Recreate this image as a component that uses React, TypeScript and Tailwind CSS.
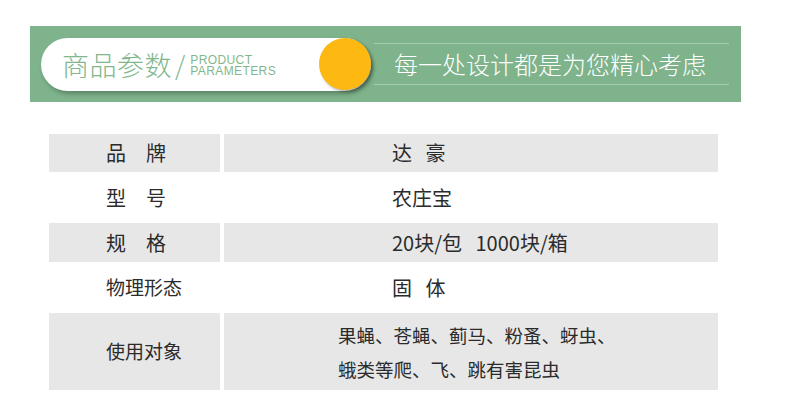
const rows = [
  { label: '品　牌', value: '达\u00a0\u00a0\u00a0豪', h: 'h-[38px]', gray: true, lsize: 'text-[20px]' },
  { label: '型　号', value: '农庄宝', h: 'h-[51px]', gray: false, lsize: 'text-[20px]' },
  { label: '规　格', value: '20块/包\u00a0\u00a0\u00a01000块/箱', h: 'h-[39px]', gray: true, lsize: 'text-[20px]' },
  { label: '物理形态', value: '固\u00a0\u00a0\u00a0体', h: 'h-[51px]', gray: false, lsize: 'text-[19px]' },
];

export default function App() {
  return (
    <main
      className="w-[785px] h-[410px] bg-white overflow-hidden text-[#2b2b2b]"
      style={{ fontFamily: '"Noto Sans CJK SC", "Noto Sans", sans-serif' }}
    >
      {/* Banner */}
      <div className="ml-[30px] mt-[26px] w-[711px] h-[76px] bg-[#7eb38b] flex items-center">
        <div className="ml-[11px] w-[330px] h-[53px] rounded-full bg-white flex items-center pl-[21px] shadow-[2px_3px_4px_rgba(0,0,0,0.25)]">
          <span className="text-[27px] font-light text-[#82b78e] leading-none tracking-[0.5px]">商品参数</span>
          <span className="text-[26px] font-light text-[#82b78e] leading-none ml-[3px]">/</span>
          <span
            className="ml-[5px] mt-[4px] whitespace-pre-line text-[12px] leading-[11px] tracking-[0.4px] text-[#82b78e]"
            style={{ fontFamily: '"Liberation Sans", Arial, sans-serif' }}
          >
            {'PRODUCT\nPARAMETERS'}
          </span>
          <div className="ml-auto w-[52px] h-[52px] rounded-full bg-[#fdb812] shadow-[2px_2px_3px_rgba(0,0,0,0.3)]" />
        </div>
        <div className="ml-[3px] w-[355px] h-[42px] border-y border-[#a7ccb0] flex items-center pl-[20px]">
          <span className="text-[24px] font-light text-white leading-none">每一处设计都是为您精心考虑</span>
        </div>
      </div>

      {/* Parameter table */}
      <div className="ml-[49px] mt-[32px] w-[669px] flex flex-col text-[20px]">
        {rows.map((r) => (
          <div key={r.label} className={`flex gap-[4px] ${r.h}`}>
            <div className={`w-[171px] flex items-center pl-[57px] ${r.lsize} ${r.gray ? 'bg-[#e7e7e7]' : ''}`}>{r.label}</div>
            <div className={`flex-1 flex items-center pl-[168px] ${r.gray ? 'bg-[#e7e7e7]' : ''}`}>{r.value}</div>
          </div>
        ))}
        <div className="flex gap-[4px] h-[77px]">
          <div className="w-[171px] flex items-center pl-[57px] text-[19px] bg-[#e7e7e7]">使用对象</div>
          <div className="flex-1 flex flex-col justify-center pl-[114px] text-[18.5px] leading-[34px] bg-[#e7e7e7]">
            <span>果蝇、苍蝇、蓟马、粉蚤、蚜虫、</span>
            <span>蛾类等爬、飞、跳有害昆虫</span>
          </div>
        </div>
      </div>
    </main>
  );
}
